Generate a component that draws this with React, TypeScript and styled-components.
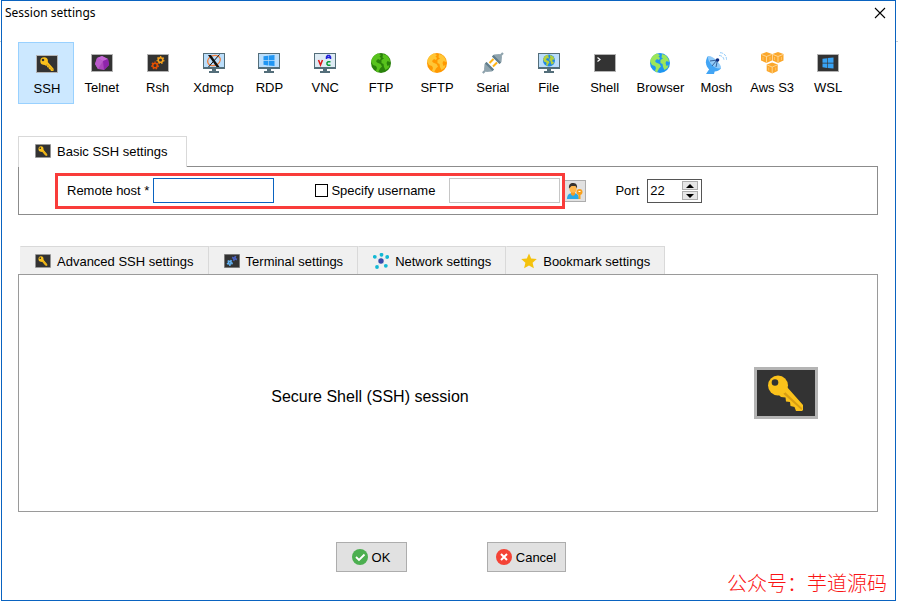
import React, { useState } from "react";
import styled, { createGlobalStyle } from "styled-components";

const GlobalStyle = createGlobalStyle`
  *, *::before, *::after { box-sizing: border-box; }
  body {
    margin: 0;
    background: #fff;
    color: #000;
    font-family: "Liberation Sans", Arial, sans-serif;
    font-size: 13px;
  }
  button, input { font: inherit; color: inherit; }
`;

const Desktop = styled.div`
  min-height: 100vh;
  padding: 0 2px 2px 1px;
  display: flex;
  background: linear-gradient(#c3ccd4, #c3ccd4) 0 41px / 100% 1px no-repeat #fff;
`;

const Dialog = styled.form`
  flex: 1;
  display: flex;
  flex-direction: column;
  background: #fff;
  border: 1px solid #0a63c0;
`;

const TitleBar = styled.header`
  display: flex;
  justify-content: space-between;
  align-items: center;
  height: 24px;
  padding: 0 8px 0 3px;
`;

const Title = styled.h1`
  margin: 0;
  font: 400 12px/16px "Noto Sans", sans-serif;
`;

const CloseButton = styled.button`
  display: flex;
  padding: 1px;
  border: 0;
  background: none;
`;

const SessionTypes = styled.nav`
  display: grid;
  grid-template-columns: repeat(15, 1fr);
  margin: 17px 39px 0 16px;
`;

const SessionType = styled.button<{ $active?: boolean }>`
  display: flex;
  flex-direction: column;
  align-items: center;
  gap: 6px;
  height: 62px;
  padding: ${(p) => (p.$active ? "10px 0 0 2px" : "9px 0 0")};
  white-space: nowrap;
  line-height: 16px;
  border: 1px solid ${(p) => (p.$active ? "#99d1ff" : "transparent")};
  background: ${(p) => (p.$active ? "#cce8ff" : "transparent")};
`;

const Section = styled.section<{ $grow?: boolean }>`
  display: flex;
  flex-direction: column;
  margin: ${(p) => (p.$grow ? "31px" : "32px")} 17px 0 16px;
  flex: ${(p) => (p.$grow ? "1" : "none")};
`;

const Tabs = styled.div<{ $inset?: boolean }>`
  display: flex;
  padding-left: ${(p) => (p.$inset ? "2px" : "0")};
`;

const Tab = styled.button<{ $active?: boolean }>`
  display: flex;
  align-items: center;
  gap: 6px;
  height: ${(p) => (p.$active ? "31px" : "28px")};
  margin-bottom: ${(p) => (p.$active ? "-1px" : "0")};
  padding: ${(p) => (p.$active ? "0 18px 2px 16px" : "1px 14px 0")};
  z-index: ${(p) => (p.$active ? 1 : 0)};
  white-space: nowrap;
  border: 1px solid #d9d9d9;
  border-bottom: 0;
  border-left-color: ${(p) => (p.$active ? "#d9d9d9" : "#f0f0f0")};
  background: ${(p) => (p.$active ? "#fff" : "#f0f0f0")};
`;

const BasicPanel = styled.div`
  display: flex;
  align-items: center;
  height: 49px;
  padding-left: 36px;
  border: 1px solid #8c8c8c;
`;

const Highlight = styled.div`
  display: flex;
  align-items: center;
  height: 36px;
  padding: 0 2px 0 9px;
  border: 3px solid #f93c3a;
`;

const FieldLabel = styled.label`
  white-space: nowrap;
`;

const TextInput = styled.input<{ $focus?: boolean }>`
  width: ${(p) => (p.$focus ? "121px" : "111px")};
  height: 25px;
  margin-left: ${(p) => (p.$focus ? "4px" : "14px")};
  padding: 0 3px;
  border: 1px solid ${(p) => (p.$focus ? "#0a63c0" : "#c6c6c6")};
  border-radius: 0;
  outline: none;
  background: #fff;
`;

const CheckLabel = styled.label`
  display: flex;
  align-items: center;
  gap: 3px;
  margin-left: 41px;
  white-space: nowrap;
`;

const Checkbox = styled.input`
  appearance: none;
  width: 13px;
  height: 13px;
  margin: 0;
  border: 1px solid #000;
  background: #fff;
  &:checked { background: #333; box-shadow: inset 0 0 0 2px #fff; }
`;

const UserButton = styled.button`
  display: flex;
  align-items: center;
  justify-content: center;
  width: 21px;
  height: 22px;
  padding: 0;
  border: 1px solid #adadad;
  border-left: 0;
  background: #e1e1e1;
`;

const PortLabel = styled(FieldLabel)`
  margin: 0 8px 0 29px;
`;

const Spinner = styled.div`
  display: flex;
  align-items: center;
  width: 55px;
  height: 24px;
  padding-right: 3px;
  border: 1px solid #555;
`;

const PortInput = styled.input`
  flex: 1;
  min-width: 0;
  padding: 0 0 0 2px;
  border: 0;
  outline: none;
  background: none;
`;

const Steps = styled.div`
  display: grid;
  gap: 1px;
`;

const Step = styled.button`
  display: flex;
  align-items: center;
  justify-content: center;
  width: 16px;
  height: 9px;
  padding: 0;
  border: 1px solid #adadad;
  background: #e6e6e6;
`;

const SummaryPanel = styled.div`
  flex: 1;
  display: grid;
  grid-template-columns: 702fr 156fr;
  align-items: center;
  border: 1px solid #9a9a9a;
`;

const Summary = styled.p`
  margin: 8px 0 0;
  text-align: center;
  font-size: 16px;
  line-height: 20px;
`;

const BigKey = styled.div`
  display: flex;
  justify-content: center;
  width: 64px;
  margin-left: 33px;
`;

const Footer = styled.footer`
  display: grid;
  grid-template-columns: 1fr 71px 80px 79px 1fr;
  align-items: start;
  height: 88px;
  padding: 30px 0 0 4px;
`;

const ActionButton = styled.button<{ $column: number }>`
  grid-column: ${(p) => p.$column};
  display: flex;
  align-items: center;
  justify-content: center;
  gap: 4px;
  height: 30px;
  padding: 0;
  border: 1px solid #adadad;
  background: #e1e1e1;
`;

const Credit = styled.span`
  grid-column: 5;
  justify-self: end;
  margin: 27px 8px 0 0;
  white-space: nowrap;
  color: #fa1414;
  font: 300 20px/28px "Noto Sans CJK SC", sans-serif;
`;

const Svg = styled.svg`
  display: block;
  flex: none;
`;

const KeyShape = () => (
  <>
    <path d="M33 20 49 38v5l-1 1h-6l-1.500-4-4-1-.5-4-4-.5-.5-4-4.500-.5-3-3z" fill="#fbc21b" />
    <path d="m31 25 17 16-.5 2L29 26.500z" fill="#d99e12" />
    <circle cx="24" cy="18.500" r="10" fill="#fbc21b" />
    <circle cx="21" cy="15.500" r="3.300" fill="#333" />
  </>
);

const KeyTile = ({ w, h, edge = 3 }: { w: number; h: number; edge?: number }) => (
  <Svg width={w} height={h} viewBox="0 0 64 52" preserveAspectRatio="none">
    <rect width="64" height="52" fill="#b4b4b4" />
    <rect x={edge} y={edge} width={64 - edge * 2} height={52 - edge * 2} fill="#333" />
    <KeyShape />
  </Svg>
);

const Icon = ({ children }: { children: React.ReactNode }) => (
  <Svg width="22" height="22" viewBox="0 0 22 22">{children}</Svg>
);

const Tile = () => (
  <>
    <rect y="2" width="22" height="18" fill="#b4b4b4" />
    <rect x="1" y="3" width="20" height="16" fill="#333" />
  </>
);

const Monitor = () => (
  <>
    <path d="M9 17h4v2h3v2H6v-2h3z" fill="#546e7a" />
    <rect y="1" width="22" height="16" fill="#546e7a" />
    <rect x="1" y="2" width="20" height="13" fill="#bbdefb" />
  </>
);

const Gear = ({ x, y, r, color }: { x: number; y: number; r: number; color: string }) => (
  <g fill="none" stroke={color}>
    <circle cx={x} cy={y} r={r} strokeWidth="1.600" />
    <circle cx={x} cy={y} r={r + 1.1} strokeWidth="1.200" strokeDasharray="1.500 1.500" />
  </g>
);

const Globe = ({ x, y, r, sea, land }: { x: number; y: number; r: number; sea: string; land: string }) => (
  <g transform={`translate(${x - r} ${y - r}) scale(${r / 10})`}>
    <circle cx="10" cy="10" r="10" fill={sea} />
    <path d="M7 .5C3 1.700.6 5 .2 8.700L2 12l3 1 1 2-1 3 2 1.500 2-4 2-2-1.500-2.500L6 9.500 5 8l2-2 2 1 1-2-1.500-1.500L10 2zM12 1l4 1.500 2.500 3.500.5 3-2.500-1-1 2 1 3 2-1-1 3-3 2-1.500-3-.5-3-2-1 0-3 2.500-1.500-1.500-1z" fill={land} />
  </g>
);

const Windows = ({ x, y, color }: { x: number; y: number; color: string }) => (
  <path transform={`translate(${x} ${y})`} d="M0 1.300 4.600.7v4.600H0zM5.200.6 11 0v5.300H5.200zM0 5.900h4.600v4.500L0 9.800zM5.200 5.900H11V11l-5.800-.6z" fill={color} />
);

const Cube = ({ x, y }: { x: number; y: number }) => (
  <g transform={`translate(${x} ${y})`}>
    <path d="m5.500 0 5.500 2v6.500L5.500 11 0 8.500V2z" fill="#fba72b" />
    <path d="m.5 2.500 5 2 5-2M5.500 4.500v6" stroke="#ffe0a8" fill="none" strokeWidth=".8" />
    <path d="M2 5v3M9 5v3" stroke="#ffcf80" strokeWidth=".7" />
  </g>
);

const SESSIONS: { name: string; icon: React.ReactNode }[] = [
  {
    name: "SSH",
    icon: (
      <Icon>
        <Tile />
        <g transform="translate(-1 1) scale(.38 .385)"><KeyShape /></g>
      </Icon>
    ),
  },
  {
    name: "Telnet",
    icon: (
      <Icon>
        <Tile />
        <path d="m11 4 6 3 1 6-5 5-6-1-3-5 2-6z" fill="#ab47bc" />
        <path d="m11 4 6 3-5 2-6-3z" fill="#c568d6" />
        <path d="m17 7 1 6-5 5-1-9z" fill="#8e24aa" />
        <path d="m6 6-2 6 3 5 5-8z" fill="#ba5bcb" />
      </Icon>
    ),
  },
  {
    name: "Rsh",
    icon: (
      <Icon>
        <Tile />
        <Gear x={13.5} y={8} r={2.3} color="#f5a01a" />
        <Gear x={8} y={13.5} r={2.3} color="#e65100" />
      </Icon>
    ),
  },
  {
    name: "Xdmcp",
    icon: (
      <Icon>
        <Monitor />
        <ellipse cx="11" cy="8.500" rx="6.500" ry="5" transform="rotate(-20 11 8.500)" fill="none" stroke="#f08040" strokeWidth="1.300" />
        <path d="M5 3h3l8.500 12h-3z" fill="#111" />
        <path d="m16.500 2.500-11 12.500" stroke="#111" />
      </Icon>
    ),
  },
  { name: "RDP", icon: <Icon><Monitor /><Windows x={5.5} y={3} color="#2196f3" /></Icon> },
  {
    name: "VNC",
    icon: (
      <Icon>
        <Monitor />
        <rect x="1" y="2" width="20" height="13" fill="#deebf4" />
        <g fill="none" strokeWidth="1.500">
          <path d="m4.500 8 2 5 2-5" stroke="#e01515" />
          <path d="M12.500 7V5l1-1.500h2l1 1.500v2M12.500 5.500h4" stroke="#2020d8" />
          <path d="M16.500 9.700H14l-1 1v1.500l1 1h2.500" stroke="#0a9b35" />
        </g>
      </Icon>
    ),
  },
  { name: "FTP", icon: <Icon><Globe x={11} y={11} r={10} sea="#2a820b" land="#58c21d" /></Icon> },
  { name: "SFTP", icon: <Icon><Globe x={11} y={11} r={10} sea="#ff9800" land="#ffc636" /></Icon> },
  {
    name: "Serial",
    icon: (
      <Icon>
        <path d="m.8 21 4-4M17 5l4-4" stroke="#90a4ae" strokeWidth="2.200" />
        <path d="m7.500 11 4-4M11 14.500l4-4" stroke="#ffb414" strokeWidth="2" />
        <path d="m4.500 10 7.500 7.500-2 2-5.500.5L2 17.500l.5-5.500z" fill="#90a4ae" />
        <path d="m4.500 10 7.500 7.500-1.500 1.500L3 11.500z" fill="#607d8b" />
        <path d="M17.500 12 10 4.500l2-2 5.500-.5L20 4.500l-.5 5.500z" fill="#90a4ae" />
        <path d="M17.500 12 10 4.500 11.500 3l7.500 7.500z" fill="#607d8b" />
      </Icon>
    ),
  },
  { name: "File", icon: <Icon><Monitor /><Globe x={11} y={8.5} r={6} sea="#1e88e5" land="#b5cf3c" /></Icon> },
  {
    name: "Shell",
    icon: <Icon><Tile /><path d="m3.500 5.500 2.500 2-2.500 2" fill="none" stroke="#fff" strokeWidth="1.200" /></Icon>,
  },
  { name: "Browser", icon: <Icon><Globe x={11} y={11} r={10} sea="#1e96f0" land="#9ce65a" /></Icon> },
  {
    name: "Mosh",
    icon: (
      <Icon>
        <path d="m5 16 5 2-1 4H1z" fill="#42a5f5" />
        <path d="M3 4C-.5 9 .5 15 5 18c4 2.500 8 1.500 11-1.500z" fill="#42a5f5" />
        <path d="M3 4c4-1 14 8 13 12.500C12 17 8 14.500 6 12S2.500 7 3 4z" fill="#90caf9" />
        <path d="m5 9 7.500-1-1.500 7M7 14l5-6" stroke="#37629a" fill="none" />
        <circle cx="12.500" cy="8" r="1.800" fill="#0d2c80" />
        <path d="M14 3.500c3 0 5 2 5 5M15 .7c4 0 6.500 3 6.500 7" fill="none" stroke="#90caf9" strokeDasharray="3 1" />
      </Icon>
    ),
  },
  { name: "Aws S3", icon: <Svg width="24" height="22" viewBox="0 0 24 22"><Cube x={1} y={0} /><Cube x={12.500} y={0} /><Cube x={6.700} y={10.500} /></Svg> },
  { name: "WSL", icon: <Icon><Tile /><Windows x={5.5} y={5.5} color="#38a3f5" /></Icon> },
];

const TerminalIcon = () => (
  <Svg width="16" height="14" viewBox="0 0 16 14">
    <rect width="16" height="14" fill="#9b9b9b" />
    <rect x=".7" y=".7" width="14.600" height="12.600" fill="#333" />
    <Gear x={10.5} y={4.5} r={1} color="#4a62c0" />
    <Gear x={5.8} y={8.8} r={1.4} color="#64b5f6" />
  </Svg>
);

const NODES = [[8.5, 1.8], [14.2, 4], [12.8, 12.8], [4, 14], [1.8, 3.8]];

const NetworkIcon = () => (
  <Svg width="16" height="16" viewBox="0 0 16 16">
    {NODES.map(([x, y]) => (
      <g key={x}>
        <path d={`M8 8 ${x} ${y}`} stroke="#c5e8ef" strokeWidth=".8" />
        <circle cx={x} cy={y} r="1.900" fill="#12b8d4" />
      </g>
    ))}
    <circle cx="8" cy="8" r="2.700" fill="#3949ab" />
  </Svg>
);

const StarIcon = () => (
  <Svg width="16" height="16" viewBox="0 0 16 16">
    <path d="m8 .5 2.200 5 5.600.5-4.200 3.700 1.300 5.600L8 12.400l-4.900 2.900 1.300-5.600L.2 6l5.600-.5z" fill="#f4c20d" />
  </Svg>
);

const UserKeyIcon = () => (
  <Svg width="18" height="18" viewBox="0 0 18 18">
    <path d="M1 17c0-4 2-6 6-6s6 2 6 6z" fill="#29a9e8" />
    <path d="M5 10h4v2.500L7 14l-2-1.500z" fill="#f59b23" />
    <ellipse cx="7" cy="6.500" rx="3.600" ry="4.300" fill="#ffb74d" />
    <path d="M3 6.500C2.500 2.500 4.500.8 7.500 1c3 .2 4 2.500 3.500 5.500L9.500 4h-4z" fill="#37332f" />
    <circle cx="13.500" cy="10" r="3" fill="#f9a01b" />
    <path d="M12.500 12h2v5h-2z" fill="#f9a01b" />
    <path d="M12.500 9.500h2" stroke="#fff" />
  </Svg>
);

const CheckIcon = () => (
  <Svg width="16" height="16" viewBox="0 0 16 16">
    <circle cx="8" cy="8" r="8" fill="#4caf50" />
    <path d="m4 8 3 3 5.500-5.500" fill="none" stroke="#fff" strokeWidth="1.800" />
  </Svg>
);

const CrossIcon = () => (
  <Svg width="16" height="16" viewBox="0 0 16 16">
    <circle cx="8" cy="8" r="8" fill="#f44336" />
    <path d="m5 5 6 6M11 5l-6 6" stroke="#fff" strokeWidth="2" />
  </Svg>
);

const Arrow = ({ down }: { down?: boolean }) => (
  <Svg width="8" height="4" viewBox="0 0 8 4">
    <path d={down ? "M0 0h8L4 4z" : "M0 4h8L4 0z"} />
  </Svg>
);

const SETTINGS = [
  { name: "Advanced SSH settings", icon: <KeyTile w={16} h={14} /> },
  { name: "Terminal settings", icon: <TerminalIcon /> },
  { name: "Network settings", icon: <NetworkIcon /> },
  { name: "Bookmark settings", icon: <StarIcon /> },
];

export default function App() {
  const [session, setSession] = useState("SSH");
  const [port, setPort] = useState(22);

  return (
    <>
      <GlobalStyle />
      <Desktop>
        <Dialog onSubmit={(e) => e.preventDefault()}>
          <TitleBar>
            <Title>Session settings</Title>
            <CloseButton type="button" aria-label="Close">
              <Svg width="12" height="12" viewBox="0 0 12 12">
                <path d="m1 1 10 10M11 1 1 11" stroke="#000" strokeWidth="1.100" />
              </Svg>
            </CloseButton>
          </TitleBar>

          <SessionTypes>
            {SESSIONS.map(({ name, icon }) => (
              <SessionType key={name} type="button" $active={name === session} onClick={() => setSession(name)}>
                {icon}
                {name}
              </SessionType>
            ))}
          </SessionTypes>

          <Section>
            <Tabs>
              <Tab type="button" $active>
                <KeyTile w={16} h={14} />
                Basic SSH settings
              </Tab>
            </Tabs>
            <BasicPanel>
              <Highlight>
                <FieldLabel htmlFor="host">Remote host *</FieldLabel>
                <TextInput id="host" $focus autoFocus />
                <CheckLabel>
                  <Checkbox type="checkbox" />
                  Specify username
                </CheckLabel>
                <TextInput aria-label="Username" />
              </Highlight>
              <UserButton type="button" aria-label="Manage users"><UserKeyIcon /></UserButton>
              <PortLabel htmlFor="port">Port</PortLabel>
              <Spinner>
                <PortInput id="port" inputMode="numeric" value={port} onChange={(e) => setPort(Number(e.target.value) || 0)} />
                <Steps>
                  <Step type="button" aria-label="Increase port" onClick={() => setPort(port + 1)}><Arrow /></Step>
                  <Step type="button" aria-label="Decrease port" onClick={() => setPort(port - 1)}><Arrow down /></Step>
                </Steps>
              </Spinner>
            </BasicPanel>
          </Section>

          <Section $grow>
            <Tabs $inset>
              {SETTINGS.map(({ name, icon }) => (
                <Tab key={name} type="button">
                  {icon}
                  {name}
                </Tab>
              ))}
            </Tabs>
            <SummaryPanel>
              <Summary>Secure Shell (SSH) session</Summary>
              <BigKey><KeyTile w={64} h={52} /></BigKey>
            </SummaryPanel>
          </Section>

          <Footer>
            <ActionButton $column={2} type="submit"><CheckIcon />OK</ActionButton>
            <ActionButton $column={4} type="button"><CrossIcon />Cancel</ActionButton>
            <Credit lang="zh">公众号：芋道源码</Credit>
          </Footer>
        </Dialog>
      </Desktop>
    </>
  );
}
